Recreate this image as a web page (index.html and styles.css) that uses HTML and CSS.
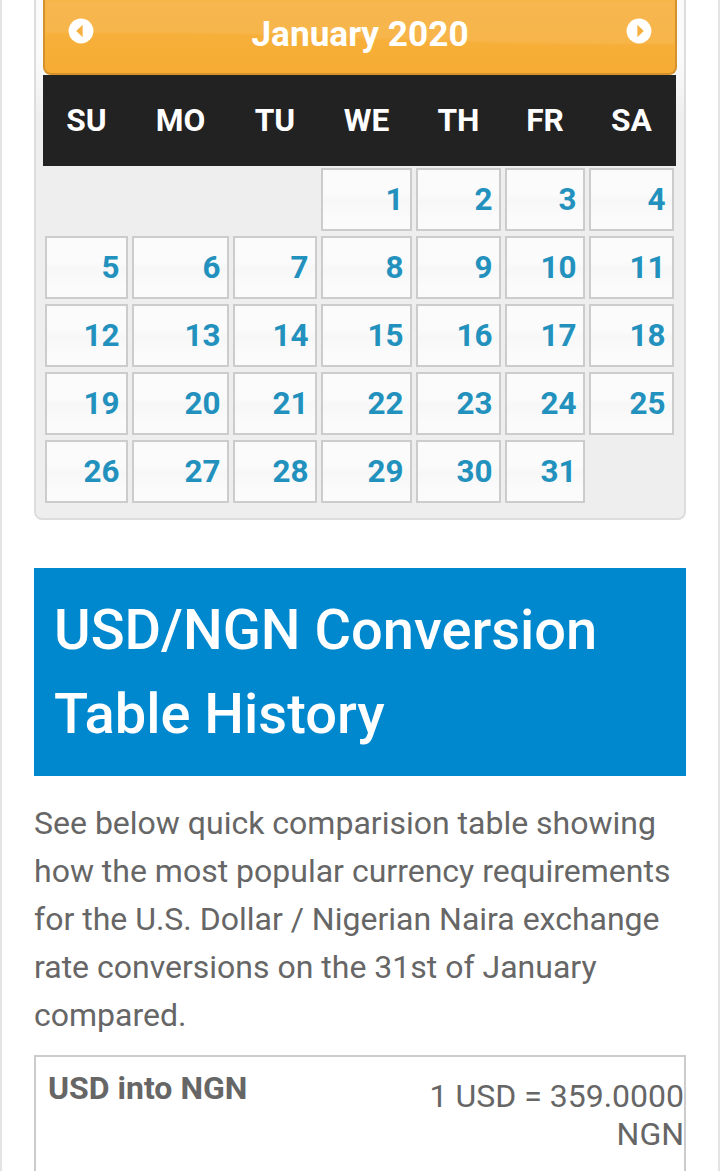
FILE: index.html
```html
<!DOCTYPE html>
<html lang="en">
<head>
<meta charset="utf-8">
<title>USD/NGN Conversion Table History</title>
<link rel="stylesheet" href="styles.css">
</head>
<body>
<main class="page">
  <section class="calendar">
    <header class="cal-header">
      <svg class="gloss" viewBox="0 0 630 73" preserveAspectRatio="none"><defs><linearGradient id="shine" x1="0" y1="0" x2="0" y2="1"><stop offset="0" stop-color="#f8b850"/><stop offset="1" stop-color="#f7b54a"/></linearGradient></defs><path fill="url(#shine)" d="M0 -5H640V44C570 44 500 44 430 42C320 39 220 33 110 33H-10V-5Z"/></svg>
      <svg class="nav" viewBox="0 0 26 26"><circle cx="13" cy="13" r="12.4"/><path d="M8.2 13L14.6 6.8V19.2Z"/></svg>
      <span class="month">January 2020</span>
      <svg class="nav" viewBox="0 0 26 26"><circle cx="13" cy="13" r="12.4"/><path d="M17.8 13L11.4 6.8V19.2Z"/></svg>
    </header>
    <div class="weekdays"><span>SU</span><span>MO</span><span>TU</span><span>WE</span><span>TH</span><span>FR</span><span>SA</span></div>
    <div class="days">
      <a class="day first">1</a><a class="day">2</a><a class="day">3</a><a class="day">4</a>
      <a class="day">5</a><a class="day">6</a><a class="day">7</a><a class="day">8</a><a class="day">9</a><a class="day">10</a><a class="day">11</a>
      <a class="day">12</a><a class="day">13</a><a class="day">14</a><a class="day">15</a><a class="day">16</a><a class="day">17</a><a class="day">18</a>
      <a class="day">19</a><a class="day">20</a><a class="day">21</a><a class="day">22</a><a class="day">23</a><a class="day">24</a><a class="day">25</a>
      <a class="day">26</a><a class="day">27</a><a class="day">28</a><a class="day">29</a><a class="day">30</a><a class="day">31</a>
    </div>
  </section>
  <h2 class="title">USD/NGN Conversion<br>Table History</h2>
  <p class="intro">See below quick comparision table showing<br>how the most popular currency requirements<br>for the U.S. Dollar / Nigerian Naira exchange<br>rate conversions on the 31st of January<br>compared.</p>
  <div class="rates">
    <strong class="pair">USD into NGN</strong>
    <span class="value">1 USD = 359.0000<br>NGN</span>
  </div>
</main>
</body>
</html>
```
FILE: styles.css
```css
* { box-sizing: border-box; }
body { margin: 0; background: #fff; font-family: Roboto, sans-serif; font-size: 32px; color: #666; }
.page { height: 1171px; padding: 0 32px; border-left: 2px solid #e4e4e4; border-right: 2px solid #e4e4e4; overflow: hidden; }
.calendar { height: 520px; padding: 0 7px; border: 2px solid #ddd; border-top: 0; border-radius: 0 0 8px 8px; background: linear-gradient(#fafafa 60px, #eee 120px); }
.cal-header { position: relative; width: 634px; height: 75px; display: flex; justify-content: space-between; padding: 18px 23px 0; border: 2px solid #d5922c; border-top: 0; border-radius: 0 0 8px 8px; background: linear-gradient(#f6b03a 40%, #f6ac34); overflow: hidden; }
.gloss { position: absolute; inset: 0; width: 100%; height: 100%; filter: blur(1px); }
.nav { position: relative; width: 26px; height: 26px; fill: #fff; }
.nav path { fill: #f7b03f; }
.month { position: relative; color: #fff; font-size: 35.2px; font-weight: 700; line-height: 32px; }
.weekdays, .days { display: grid; grid-template-columns: 87px 101px 88px 95px 89px 84px 89px; width: 633px; }
.weekdays { height: 91px; background: #222; color: #fff; font-size: 31.68px; font-weight: 700; line-height: 91px; text-align: center; }
.days { grid-auto-rows: 63px; row-gap: 5px; padding-top: 2px; }
.day { margin: 0 2px; padding-right: 6.4px; border: 2px solid #ccc; background: linear-gradient(#fbfbfb 40%, #f7f7f7 52%, #fbfbfb 80%); color: #2391bd; font-size: 31.4px; font-weight: 700; line-height: 59px; text-align: right; }
.first { grid-column: 4; }
.title { margin: 48px 0 0; padding: 20px; background: #0088cf; color: #fff; font-size: 56px; font-weight: 500; line-height: 84px; }
.intro { margin: 23px 0 16px; line-height: 48px; white-space: nowrap; }
.rates { display: flex; justify-content: space-between; height: 140px; border: 2px solid #ccc; }
.pair { padding: 12px; font-size: 32px; line-height: 38px; }
.value { padding-top: 20px; font-size: 32px; line-height: 38px; text-align: right; }
```
